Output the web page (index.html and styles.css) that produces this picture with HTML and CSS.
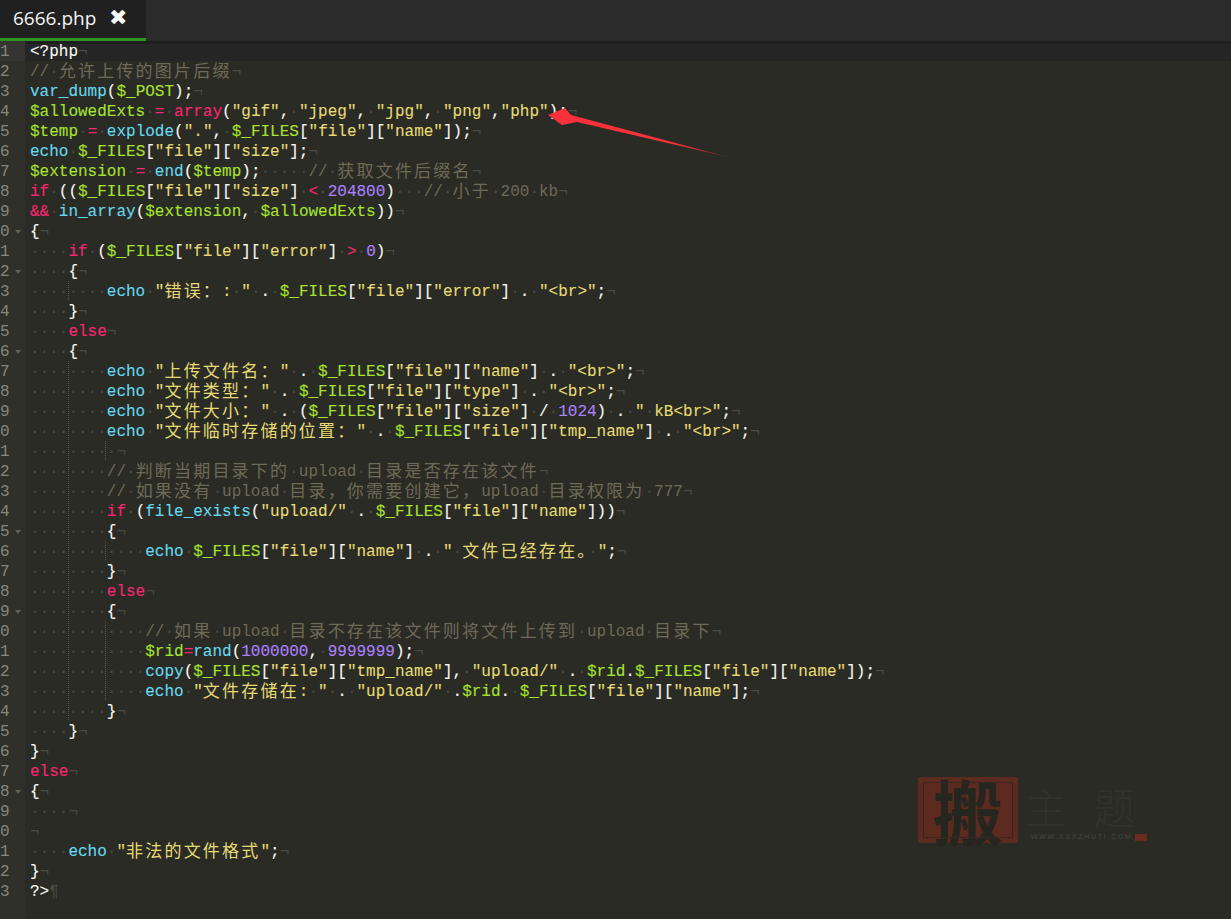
FILE: index.html
```html
<!DOCTYPE html>
<html lang="zh">
<head>
<meta charset="utf-8">
<title>6666.php</title>
<link rel="stylesheet" href="styles.css">
</head>
<body>
<div class="app">
<header class="tabbar">
  <div class="tab"><span class="tab-name">6666.php</span><span class="tab-close">✖</span></div>
</header>
<main class="editor">
<div class="line active"><div class="gutter"><span class="num">1</span></div><div class="code">&lt;?php<i class="d">¬</i></div></div>
<div class="line"><div class="gutter"><span class="num">2</span></div><div class="code"><span class="c">//<i class="d">·</i><span class="z">允许上传的图片后缀</span></span><i class="d">¬</i></div></div>
<div class="line"><div class="gutter"><span class="num">3</span></div><div class="code"><span class="f">var_dump</span>(<span class="v">$_POST</span>);<i class="d">¬</i></div></div>
<div class="line"><div class="gutter"><span class="num">4</span></div><div class="code"><span class="v">$allowedExts</span><i class="d">·</i><span class="k">=</span><i class="d">·</i><span class="k">array</span>(<span class="s">"gif"</span>,<i class="d">·</i><span class="s">"jpeg"</span>,<i class="d">·</i><span class="s">"jpg"</span>,<i class="d">·</i><span class="s">"png"</span>,<span class="s">"php"</span>);<i class="d">¬</i></div></div>
<div class="line"><div class="gutter"><span class="num">5</span></div><div class="code"><span class="v">$temp</span><i class="d">·</i><span class="k">=</span><i class="d">·</i><span class="f">explode</span>(<span class="s">"."</span>,<i class="d">·</i><span class="v">$_FILES</span>[<span class="s">"file"</span>][<span class="s">"name"</span>]);<i class="d">¬</i></div></div>
<div class="line"><div class="gutter"><span class="num">6</span></div><div class="code"><span class="f">echo</span><i class="d">·</i><span class="v">$_FILES</span>[<span class="s">"file"</span>][<span class="s">"size"</span>];<i class="d">¬</i></div></div>
<div class="line"><div class="gutter"><span class="num">7</span></div><div class="code"><span class="v">$extension</span><i class="d">·</i><span class="k">=</span><i class="d">·</i><span class="f">end</span>(<span class="v">$temp</span>);<i class="d">·····</i><span class="c">//<i class="d">·</i><span class="z">获取文件后缀名</span></span><i class="d">¬</i></div></div>
<div class="line"><div class="gutter"><span class="num">8</span></div><div class="code"><span class="k">if</span><i class="d">·</i>((<span class="v">$_FILES</span>[<span class="s">"file"</span>][<span class="s">"size"</span>]<i class="d">·</i><span class="k">&lt;</span><i class="d">·</i><span class="n">204800</span>)<i class="d">···</i><span class="c">//<i class="d">·</i><span class="z">小于</span><i class="d">·</i>200<i class="d">·</i>kb</span><i class="d">¬</i></div></div>
<div class="line"><div class="gutter"><span class="num">9</span></div><div class="code"><span class="k">&amp;&amp;</span><i class="d">·</i><span class="f">in_array</span>(<span class="v">$extension</span>,<i class="d">·</i><span class="v">$allowedExts</span>))<i class="d">¬</i></div></div>
<div class="line"><div class="gutter"><span class="num">0</span><span class="fold"></span></div><div class="code">{<i class="d">¬</i></div></div>
<div class="line"><div class="gutter"><span class="num">1</span></div><div class="code"><i class="d">····</i><span class="k">if</span><i class="d">·</i>(<span class="v">$_FILES</span>[<span class="s">"file"</span>][<span class="s">"error"</span>]<i class="d">·</i><span class="k">&gt;</span><i class="d">·</i><span class="n">0</span>)<i class="d">¬</i></div></div>
<div class="line"><div class="gutter"><span class="num">2</span><span class="fold"></span></div><div class="code"><i class="d">····</i>{<i class="d">¬</i></div></div>
<div class="line"><div class="gutter"><span class="num">3</span></div><div class="code g1"><i class="d">········</i><span class="f">echo</span><i class="d">·</i><span class="s">"<span class="z">错误：</span>:<i class="d">·</i>"</span><i class="d">·</i>.<i class="d">·</i><span class="v">$_FILES</span>[<span class="s">"file"</span>][<span class="s">"error"</span>]<i class="d">·</i>.<i class="d">·</i><span class="s">"&lt;br&gt;"</span>;<i class="d">¬</i></div></div>
<div class="line"><div class="gutter"><span class="num">4</span></div><div class="code"><i class="d">····</i>}<i class="d">¬</i></div></div>
<div class="line"><div class="gutter"><span class="num">5</span></div><div class="code"><i class="d">····</i><span class="k">else</span><i class="d">¬</i></div></div>
<div class="line"><div class="gutter"><span class="num">6</span><span class="fold"></span></div><div class="code"><i class="d">····</i>{<i class="d">¬</i></div></div>
<div class="line"><div class="gutter"><span class="num">7</span></div><div class="code g1"><i class="d">········</i><span class="f">echo</span><i class="d">·</i><span class="s">"<span class="z">上传文件名：</span>"</span><i class="d">·</i>.<i class="d">·</i><span class="v">$_FILES</span>[<span class="s">"file"</span>][<span class="s">"name"</span>]<i class="d">·</i>.<i class="d">·</i><span class="s">"&lt;br&gt;"</span>;<i class="d">¬</i></div></div>
<div class="line"><div class="gutter"><span class="num">8</span></div><div class="code g1"><i class="d">········</i><span class="f">echo</span><i class="d">·</i><span class="s">"<span class="z">文件类型：</span>"</span><i class="d">·</i>.<i class="d">·</i><span class="v">$_FILES</span>[<span class="s">"file"</span>][<span class="s">"type"</span>]<i class="d">·</i>.<i class="d">·</i><span class="s">"&lt;br&gt;"</span>;<i class="d">¬</i></div></div>
<div class="line"><div class="gutter"><span class="num">9</span></div><div class="code g1"><i class="d">········</i><span class="f">echo</span><i class="d">·</i><span class="s">"<span class="z">文件大小：</span>"</span><i class="d">·</i>.<i class="d">·</i>(<span class="v">$_FILES</span>[<span class="s">"file"</span>][<span class="s">"size"</span>]<i class="d">·</i>/<i class="d">·</i><span class="n">1024</span>)<i class="d">·</i>.<i class="d">·</i><span class="s">"<i class="d">·</i>kB&lt;br&gt;"</span>;<i class="d">¬</i></div></div>
<div class="line"><div class="gutter"><span class="num">0</span></div><div class="code g1"><i class="d">········</i><span class="f">echo</span><i class="d">·</i><span class="s">"<span class="z">文件临时存储的位置：</span>"</span><i class="d">·</i>.<i class="d">·</i><span class="v">$_FILES</span>[<span class="s">"file"</span>][<span class="s">"tmp_name"</span>]<i class="d">·</i>.<i class="d">·</i><span class="s">"&lt;br&gt;"</span>;<i class="d">¬</i></div></div>
<div class="line"><div class="gutter"><span class="num">1</span></div><div class="code g12"><i class="d">·········¬</i></div></div>
<div class="line"><div class="gutter"><span class="num">2</span></div><div class="code g1"><i class="d">········</i><span class="c">//<i class="d">·</i><span class="z">判断当期目录下的</span><i class="d">·</i>upload<i class="d">·</i><span class="z">目录是否存在该文件</span></span><i class="d">¬</i></div></div>
<div class="line"><div class="gutter"><span class="num">3</span></div><div class="code g1"><i class="d">········</i><span class="c">//<i class="d">·</i><span class="z">如果没有</span><i class="d">·</i>upload<i class="d">·</i><span class="z">目录，你需要创建它，</span>upload<i class="d">·</i><span class="z">目录权限为</span><i class="d">·</i>777</span><i class="d">¬</i></div></div>
<div class="line"><div class="gutter"><span class="num">4</span></div><div class="code g1"><i class="d">········</i><span class="k">if</span><i class="d">·</i>(<span class="f">file_exists</span>(<span class="s">"upload/"</span><i class="d">·</i>.<i class="d">·</i><span class="v">$_FILES</span>[<span class="s">"file"</span>][<span class="s">"name"</span>]))<i class="d">¬</i></div></div>
<div class="line"><div class="gutter"><span class="num">5</span><span class="fold"></span></div><div class="code g1"><i class="d">········</i>{<i class="d">¬</i></div></div>
<div class="line"><div class="gutter"><span class="num">6</span></div><div class="code g12"><i class="d">············</i><span class="f">echo</span><i class="d">·</i><span class="v">$_FILES</span>[<span class="s">"file"</span>][<span class="s">"name"</span>]<i class="d">·</i>.<i class="d">·</i><span class="s">"<i class="d">·</i><span class="z">文件已经存在。</span><i class="d">·</i>"</span>;<i class="d">¬</i></div></div>
<div class="line"><div class="gutter"><span class="num">7</span></div><div class="code g1"><i class="d">········</i>}<i class="d">¬</i></div></div>
<div class="line"><div class="gutter"><span class="num">8</span></div><div class="code g1"><i class="d">········</i><span class="k">else</span><i class="d">¬</i></div></div>
<div class="line"><div class="gutter"><span class="num">9</span><span class="fold"></span></div><div class="code g1"><i class="d">········</i>{<i class="d">¬</i></div></div>
<div class="line"><div class="gutter"><span class="num">0</span></div><div class="code g12"><i class="d">············</i><span class="c">//<i class="d">·</i><span class="z">如果</span><i class="d">·</i>upload<i class="d">·</i><span class="z">目录不存在该文件则将文件上传到</span><i class="d">·</i>upload<i class="d">·</i><span class="z">目录下</span></span><i class="d">¬</i></div></div>
<div class="line"><div class="gutter"><span class="num">1</span></div><div class="code g12"><i class="d">············</i><span class="v">$rid</span><span class="k">=</span><span class="f">rand</span>(<span class="n">1000000</span>,<i class="d">·</i><span class="n">9999999</span>);<i class="d">¬</i></div></div>
<div class="line"><div class="gutter"><span class="num">2</span></div><div class="code g12"><i class="d">············</i><span class="f">copy</span>(<span class="v">$_FILES</span>[<span class="s">"file"</span>][<span class="s">"tmp_name"</span>],<i class="d">·</i><span class="s">"upload/"</span><i class="d">·</i>.<i class="d">·</i><span class="v">$rid</span>.<span class="v">$_FILES</span>[<span class="s">"file"</span>][<span class="s">"name"</span>]);<i class="d">¬</i></div></div>
<div class="line"><div class="gutter"><span class="num">3</span></div><div class="code g12"><i class="d">············</i><span class="f">echo</span><i class="d">·</i><span class="s">"<span class="z">文件存储在</span>:<i class="d">·</i>"</span><i class="d">·</i>.<i class="d">·</i><span class="s">"upload/"</span><i class="d">·</i>.<span class="v">$rid</span>.<i class="d">·</i><span class="v">$_FILES</span>[<span class="s">"file"</span>][<span class="s">"name"</span>];<i class="d">¬</i></div></div>
<div class="line"><div class="gutter"><span class="num">4</span></div><div class="code g1"><i class="d">········</i>}<i class="d">¬</i></div></div>
<div class="line"><div class="gutter"><span class="num">5</span></div><div class="code"><i class="d">····</i>}<i class="d">¬</i></div></div>
<div class="line"><div class="gutter"><span class="num">6</span></div><div class="code">}<i class="d">¬</i></div></div>
<div class="line"><div class="gutter"><span class="num">7</span></div><div class="code"><span class="k">else</span><i class="d">¬</i></div></div>
<div class="line"><div class="gutter"><span class="num">8</span><span class="fold"></span></div><div class="code">{<i class="d">¬</i></div></div>
<div class="line"><div class="gutter"><span class="num">9</span></div><div class="code"><i class="d">····¬</i></div></div>
<div class="line"><div class="gutter"><span class="num">0</span></div><div class="code"><i class="d">¬</i></div></div>
<div class="line"><div class="gutter"><span class="num">1</span></div><div class="code"><i class="d">····</i><span class="f">echo</span><i class="d">·</i><span class="s">"<span class="z">非法的文件格式</span>"</span>;<i class="d">¬</i></div></div>
<div class="line"><div class="gutter"><span class="num">2</span></div><div class="code">}<i class="d">¬</i></div></div>
<div class="line"><div class="gutter"><span class="num">3</span></div><div class="code">?&gt;<i class="d">¶</i></div></div>
</main>
<svg class="arrow" width="200" height="60" viewBox="540 105 200 60" aria-hidden="true">
  <defs><linearGradient id="tail" x1="548" y1="115" x2="728" y2="157" gradientUnits="userSpaceOnUse"><stop offset="0.7" stop-color="#f8313a"/><stop offset="1" stop-color="#8a2a2a"/></linearGradient></defs>
  <polygon points="548,115 565,108 571,115 728,157 577,122 562,125" fill="url(#tail)"/>
</svg>
<div class="mark">
  <div class="seal"><span class="seal-char">搬</span></div>
  <div class="mark-side">
    <div class="mark-title">主题</div>
    <div class="mark-foot"><span class="mark-url">WWW.XXXZHUTI.COM</span><span class="mark-dot"></span></div>
  </div>
</div>
</div>
</body>
</html>
```
FILE: styles.css
```css
* { box-sizing: border-box; }
html, body { margin: 0; height: 100%; background: #2a2b25; overflow: hidden; }
.app { position: relative; height: 919px; display: flex; flex-direction: column; }

.tabbar { height: 41px; background: #2b2b2b; flex: none; display: flex; }
.tab { width: 146px; height: 41px; background: #1f201f; border-bottom: 3px solid #2d9424; display: flex; align-items: center; padding: 0 0 3px 13px; color: #f4f4f4; }
.tab-name { font: 19px/24px "Open Sans", "Liberation Sans", sans-serif; width: 96px; }
.tab-close { font: 22px/24px "DejaVu Sans", sans-serif; color: #fafafa; }

.editor { flex: 1; background: linear-gradient(90deg, #2f3029 25px, #2a2b25 25px); font: 16px/20px "Liberation Mono", monospace; color: #f8f8f2; }
.line { display: flex; height: 20px; white-space: pre; }
.active { background: #252525; box-shadow: inset 0 3px 0 #1e1e1e; }
.gutter { width: 25px; flex: none; display: flex; align-items: center; padding-top: 1px; color: #85867e; }
.active .gutter { background: #343530; }
.num { width: 14px; }
.fold { width: 0; height: 0; margin-left: 1px; border-left: 3.5px solid transparent; border-right: 3.5px solid transparent; border-top: 4px solid #5f6057; }
.code { flex: 1; padding-left: 5px; padding-top: 1px; -webkit-text-stroke: 0.1px; }
.g1, .g12 { background-repeat: repeat-y; background-size: 1px 2px; background-image: linear-gradient(#55554a 50%, transparent 50%); background-position: 43px 0; }
.g12 { background-image: linear-gradient(#55554a 50%, transparent 50%), linear-gradient(#55554a 50%, transparent 50%); background-position: 43px 0, 80px 0; }

.d { font-style: normal; color: #494a41; -webkit-text-stroke: 0; }
.k { color: #f92672; }
.s { color: #e6db74; }
.v { color: #a6e22e; }
.f { color: #66d9ef; }
.n { color: #ae81ff; }
.c { color: #6e6a58; -webkit-text-stroke: 0; }
.z { font-family: "Noto Sans CJK SC", sans-serif; font-size: 17px; line-height: 0; letter-spacing: 2.2px; vertical-align: -1px; -webkit-text-stroke: 0; }

.arrow { position: absolute; left: 540px; top: 105px; }

.mark { position: absolute; left: 918px; top: 777px; display: flex; gap: 7px; }
.seal { width: 100px; height: 66px; background: #5c2a1f; outline: 1px solid #38261f; outline-offset: -6px; display: flex; align-items: center; justify-content: center; }
.seal-char { font: 700 70px/60px "Noto Sans CJK SC", sans-serif; color: #25261f; }
.mark-side { display: flex; flex-direction: column; width: 122px; }
.mark-title { font: 300 42px/40px "Noto Sans CJK SC", sans-serif; letter-spacing: 26px; color: #31322c; padding: 9px 0 0 0; height: 56px; white-space: nowrap; }
.mark-foot { display: flex; align-items: center; justify-content: space-between; }
.mark-url { font: 7px/8px "Liberation Sans", sans-serif; color: #45463d; padding-left: 6px; letter-spacing: 1.7px; white-space: nowrap; }
.mark-dot { width: 12px; height: 7px; background: #6c2b20; }
```
